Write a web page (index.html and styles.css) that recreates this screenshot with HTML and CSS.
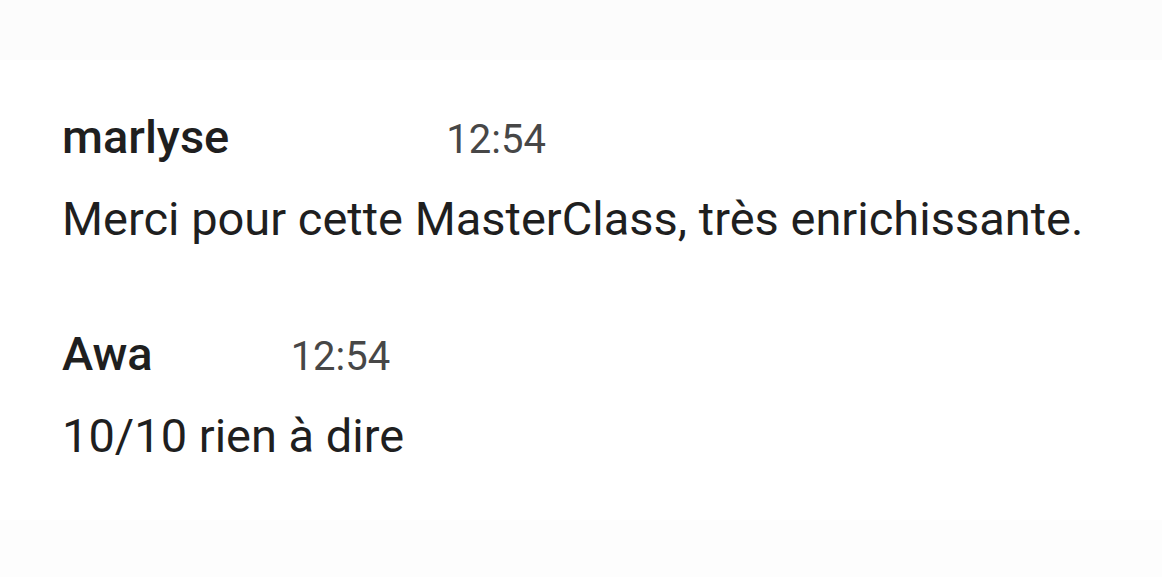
FILE: index.html
```html
<!DOCTYPE html>
<html lang="fr">
<head>
<meta charset="UTF-8">
<title>Messages</title>
<link rel="stylesheet" href="styles.css">
</head>
<body>
<div class="bande-haut"></div>
<div class="fil">
    <div class="message">
        <div class="entete entete-large">
            <span class="auteur">marlyse</span>
            <span class="heure">12:54</span>
        </div>
        <p class="texte">Merci pour cette MasterClass, très enrichissante.</p>
    </div>
    <div class="message">
        <div class="entete">
            <span class="auteur">Awa</span>
            <span class="heure">12:54</span>
        </div>
        <p class="texte">10/10 rien à dire</p>
    </div>
</div>
<div class="bande-bas"></div>
</body>
</html>
```

FILE: styles.css
```css
body {
    margin: 0;
    height: 577px;
    display: flex;
    flex-direction: column;
    background: #fff;
    font-family: Roboto, "Noto Sans", sans-serif;
    color: #1f1f1f;
    overflow: hidden;
}
.bande-haut {
    height: 60px;
    background: #fcfcfc;
}
.bande-bas {
    margin-top: auto;
    height: 57px;
    background: #fdfdfd;
}
.fil {
    padding: 49px 0 0 62px;
    display: flex;
    flex-direction: column;
    gap: 80px;
}
.entete {
    display: flex;
    align-items: baseline;
    gap: 138px;
    line-height: 55px;
}
.entete-large {
    gap: 217px;
}
.auteur {
    font-size: 47px;
    font-weight: 500;
}
.heure {
    font-size: 40px;
    color: #474747;
}
.texte {
    margin: 24px 0 0;
    font-size: 47px;
    line-height: 55px;
}
```
